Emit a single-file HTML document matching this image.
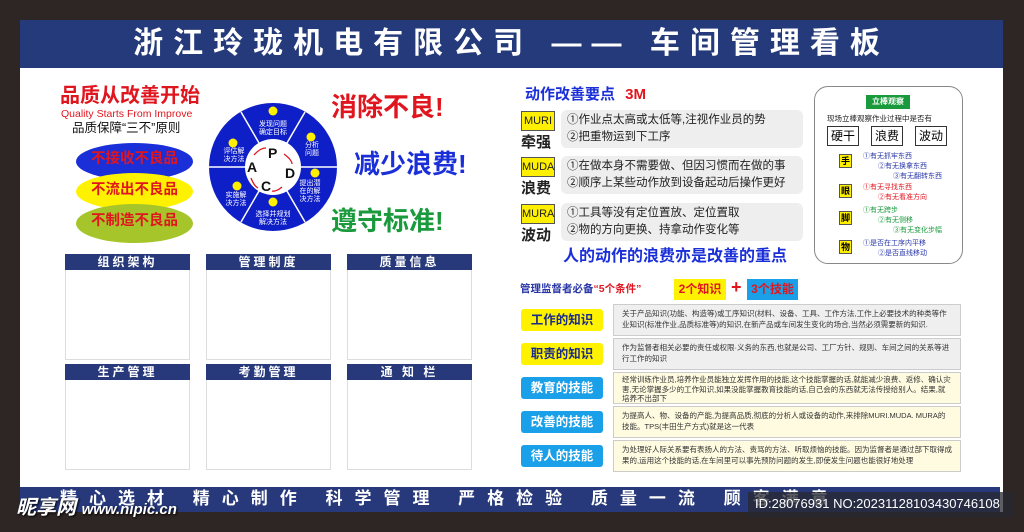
<!DOCTYPE html>
<html><head><meta charset="utf-8"><style>
*{margin:0;padding:0;box-sizing:border-box}
body{width:1024px;height:532px;background:#2e2624;position:relative;overflow:hidden;font-family:"Liberation Sans","Noto Sans CJK SC",sans-serif}
.a{position:absolute;white-space:nowrap;line-height:1.2}
.b{font-weight:bold}
.ph{position:absolute;background:#27397a;color:#fff;font-size:12px;font-weight:bold;text-align:center;letter-spacing:3px;line-height:16px;height:16px}
.pb{position:absolute;border:1px solid #ddd;background:#fff}
.mb{position:absolute;background:#eee;border-radius:6px;left:561px;width:242px;height:38px;font-size:11.5px;line-height:17px;padding:2px 6px;color:#222}
.ml{position:absolute;left:521px;width:34px;height:20px;background:#ffef00;border:1px solid #555;font-size:11px;text-align:center;line-height:18px;color:#222}
.mc{position:absolute;left:521px;font-size:15px;font-weight:bold;color:#222}
.kl{position:absolute;left:521px;width:82px;height:22px;border-radius:3px;font-size:12.5px;font-weight:bold;text-align:center;line-height:22px}
.kt{position:absolute;left:613px;width:348px;height:32px;border:1px solid #ccc;font-size:7.5px;line-height:11px;padding:3px 8px;color:#333;white-space:normal}
.sq{position:absolute;left:839px;width:13px;height:14px;background:#ffef00;border:1px solid #555;font-size:9px;font-weight:bold;text-align:center;line-height:12px}
.ob{position:absolute;border:1px solid #333;background:#fff;width:32px;height:20px;font-size:12px;text-align:center;line-height:18px}
.s7{position:absolute;font-size:7px;white-space:nowrap}
</style></head><body>
<div class="a" style="left:20px;top:20px;width:983px;height:492px;background:#fff"></div>
<div class="a" style="left:20px;top:20px;width:983px;height:48px;background:#243a7a"></div>
<div class="a b" style="left:20px;top:26px;width:983px;text-align:center;color:#fff;font-size:30px;letter-spacing:10px">浙江玲珑机电有限公司 —— 车间管理看板</div>

<div class="a b" style="left:60px;top:84px;color:#e0161f;font-size:20px;line-height:24px">品质从改善开始</div>
<div class="a" style="left:61px;top:108px;color:#e0161f;font-size:10.5px;line-height:12px">Quality Starts From Improve</div>
<div class="a" style="left:72px;top:121px;color:#111;font-size:12.5px;line-height:15px">品质保障“三不”原则</div>
<div class="a" style="left:76px;top:143px;width:117px;height:37px;border-radius:50%;background:#1a2fd8"></div>
<div class="a" style="left:76px;top:173px;width:117px;height:37px;border-radius:50%;background:#fff200"></div>
<div class="a" style="left:76px;top:204px;width:117px;height:39px;border-radius:50%;background:#a6c52a"></div>
<div class="a b" style="left:76px;top:151px;width:117px;text-align:center;color:#e0161f;font-size:14.5px">不接收不良品</div>
<div class="a b" style="left:76px;top:182px;width:117px;text-align:center;color:#e0161f;font-size:14.5px">不流出不良品</div>
<div class="a b" style="left:76px;top:213px;width:117px;text-align:center;color:#e0161f;font-size:14.5px">不制造不良品</div>

<svg class="a" style="left:208px;top:102px" width="130" height="130" viewBox="0 0 130 130">
<circle cx="65" cy="65" r="64" fill="#0f1fc8"/>
<g stroke="#fff" stroke-width="1.5">
<line x1="1" y1="65" x2="129" y2="65"/><line x1="33" y1="10" x2="97" y2="120"/><line x1="97" y1="10" x2="33" y2="120"/></g>
<circle cx="65" cy="65" r="28" fill="#fff"/>
<g font-family="Liberation Sans" font-weight="bold" font-size="14" fill="#111">
<text x="60" y="56">P</text><text x="77" y="76">D</text><text x="53" y="89">C</text><text x="39" y="70">A</text></g>
<g fill="none" stroke="#e0161f" stroke-width="1.3"><path d="M46 53 Q52 46 58 46"/><path d="M76 52 Q84 58 84 62"/><path d="M74 85 Q68 90 64 89"/><path d="M43 76 Q46 84 50 86"/></g>
<g font-size="7" fill="#fff" text-anchor="middle" font-family="Noto Sans CJK SC">
<text x="65" y="24">发现问题</text><text x="65" y="32">确定目标</text>
<text x="104" y="45">分析</text><text x="104" y="53">问题</text>
<text x="102" y="83">提出潜</text><text x="102" y="91">在的解</text><text x="102" y="99">决方法</text>
<text x="65" y="114">选择并规划</text><text x="65" y="122">解决方法</text>
<text x="28" y="95">实施解</text><text x="28" y="103">决方法</text>
<text x="26" y="51">评估解</text><text x="26" y="59">决方法</text></g>
<g fill="#ffef00"><circle cx="65" cy="9" r="4.5"/><circle cx="103" cy="35" r="4.5"/><circle cx="107" cy="71" r="4.5"/><circle cx="65" cy="100" r="4.5"/><circle cx="29" cy="84" r="4.5"/><circle cx="25" cy="41" r="4.5"/></g>
</svg>

<div class="a b" style="left:331px;top:92px;color:#e0161f;font-size:26px">消除不良!</div>
<div class="a b" style="left:354px;top:149px;color:#1a2fd8;font-size:26px">减少浪费!</div>
<div class="a b" style="left:331px;top:206px;color:#1a9a3c;font-size:26px">遵守标准!</div>

<div class="pb" style="left:65px;top:254px;width:125px;height:106px"></div><div class="ph" style="left:65px;top:254px;width:125px">组织架构</div>
<div class="pb" style="left:206px;top:254px;width:125px;height:106px"></div><div class="ph" style="left:206px;top:254px;width:125px">管理制度</div>
<div class="pb" style="left:347px;top:254px;width:125px;height:106px"></div><div class="ph" style="left:347px;top:254px;width:125px">质量信息</div>
<div class="pb" style="left:65px;top:364px;width:125px;height:106px"></div><div class="ph" style="left:65px;top:364px;width:125px">生产管理</div>
<div class="pb" style="left:206px;top:364px;width:125px;height:106px"></div><div class="ph" style="left:206px;top:364px;width:125px">考勤管理</div>
<div class="pb" style="left:347px;top:364px;width:125px;height:106px"></div><div class="ph" style="left:347px;top:364px;width:125px">通 知 栏</div>

<div class="a b" style="left:525px;top:86px;color:#1a2fd8;font-size:15px">动作改善要点 <span style="color:#e0161f;margin-left:6px">3M</span></div>
<div class="ml" style="top:111px">MURI</div><div class="mc" style="top:131px">牵强</div>
<div class="mb" style="top:110px">①作业点太高或太低等,注视作业员的势<br>②把重物运到下工序</div>
<div class="ml" style="top:157px">MUDA</div><div class="mc" style="top:177px">浪费</div>
<div class="mb" style="top:156px">①在做本身不需要做、但因习惯而在做的事<br>②顺序上某些动作放到设备起动后操作更好</div>
<div class="ml" style="top:204px">MURA</div><div class="mc" style="top:224px">波动</div>
<div class="mb" style="top:203px">①工具等没有定位置放、定位置取<br>②物的方向更换、持拿动作变化等</div>
<div class="a b" style="left:563px;top:247px;color:#1a2fd8;font-size:16px">人的动作的浪费亦是改善的重点</div>

<div class="a" style="left:814px;top:86px;width:149px;height:178px;border:1.5px solid #888;border-radius:14px"></div>
<div class="a b" style="left:866px;top:95px;width:44px;height:14px;background:#1a9a3c;color:#fff;font-size:8px;text-align:center;line-height:14px">立棒观察</div>
<div class="s7" style="left:827px;top:113px;font-size:7.5px;color:#222">现场立棒观察作业过程中是否有</div>
<div class="ob" style="left:827px;top:126px">硬干</div><div class="ob" style="left:871px;top:126px">浪费</div><div class="ob" style="left:915px;top:126px">波动</div>
<div class="sq" style="top:154px">手</div><div class="sq" style="top:184px">眼</div><div class="sq" style="top:211px">脚</div><div class="sq" style="top:240px">物</div>
<div class="s7" style="left:863px;top:151px;color:#2a37a8">①有无抓牢东西</div>
<div class="s7" style="left:878px;top:161px;color:#2a37a8">②有无换拿东西</div>
<div class="s7" style="left:893px;top:171px;color:#2a37a8">③有无翻转东西</div>
<div class="s7" style="left:863px;top:182px;color:#e0161f">①有无寻找东西</div>
<div class="s7" style="left:878px;top:192px;color:#e0161f">②有无看准方向</div>
<div class="s7" style="left:863px;top:205px;color:#1a9a3c">①有无跨步</div>
<div class="s7" style="left:878px;top:215px;color:#1a9a3c">②有无侧移</div>
<div class="s7" style="left:893px;top:225px;color:#1a9a3c">③有无变化步幅</div>
<div class="s7" style="left:863px;top:238px;color:#2a37a8">①是否在工序内平移</div>
<div class="s7" style="left:878px;top:248px;color:#2a37a8">②是否直线移动</div>

<div class="a b" style="left:520px;top:283px;font-size:10.5px;color:#2a37a8">管理监督者必备<span style="color:#e0161f">“5个条件”</span></div>
<div class="a b" style="left:674px;top:279px;width:52px;height:21px;background:#fff200;color:#e0161f;font-size:12px;text-align:center;line-height:21px">2个知识</div>
<div class="a b" style="left:731px;top:277px;color:#e0161f;font-size:18px">+</div>
<div class="a b" style="left:747px;top:279px;width:51px;height:21px;background:#1aa0e8;color:#e0161f;font-size:12px;text-align:center;line-height:21px">3个技能</div>

<div class="kl" style="top:309px;background:#fff200;color:#1a2a8a">工作的知识</div>
<div class="kl" style="top:343px;background:#fff200;color:#1a2a8a">职责的知识</div>
<div class="kl" style="top:377px;background:#1aa0e8;color:#fff">教育的技能</div>
<div class="kl" style="top:411px;background:#1aa0e8;color:#fff">改善的技能</div>
<div class="kl" style="top:445px;background:#1aa0e8;color:#fff">待人的技能</div>
<div class="kt" style="top:304px;background:#efefef">关于产品知识(功能、构造等)或工序知识(材料、设备、工具、工作方法,工作上必要技术的种类等作业知识(标准作业,品质标准等)的知识,在新产品或车间发生变化的场合,当然必须需要新的知识.</div>
<div class="kt" style="top:338px;background:#efefef">作为监督者相关必要的责任或权限·义务的东西,也就是公司、工厂方针、规则、车间之间的关系等进行工作的知识</div>
<div class="kt" style="top:372px;background:#fffbe0;height:32px;line-height:9.5px;padding-top:2px">经常训练作业员,培养作业员能独立发挥作用的技能,这个技能掌握的话,就能减少浪费、返修、确认灾害,无论掌握多少的工作知识,如果没能掌握教育技能的话,自己会的东西就无法传授给别人。结果,就培养不出部下</div>
<div class="kt" style="top:406px;background:#fffbe0">为提高人、物、设备的产能,为提高品质,彻底的分析人或设备的动作,来排除MURI.MUDA. MURA的技能。TPS(丰田生产方式)就是这一代表</div>
<div class="kt" style="top:440px;background:#fffbe0">为处理好人际关系要有表扬人的方法、责骂的方法、听取烦恼的技能。因为监督者是通过部下取得成果的,运用这个技能的话,在车间里可以事先预防问题的发生,即使发生问题也能很好地处理</div>

<div class="a" style="left:20px;top:487px;width:980px;height:25px;background:#27397a"></div>
<div class="a b" style="left:60px;top:489px;color:#fff;font-size:17px;letter-spacing:12px">精心选材 精心制作 科学管理 严格检验 质量一流 顾客满意</div>
<div class="a" style="left:748px;top:492px;width:265px;height:25px;background:rgba(40,40,50,.75)"></div>
<div class="a" style="left:755px;top:496px;color:#fff;font-size:13px">ID:28076931 NO:20231128103430746108</div>
<div class="a b" style="left:16px;top:496px;color:#fff;font-size:20px;font-style:italic;text-shadow:1px 1px 2px #000">昵享网 <span style="font-size:15px">www.nipic.cn</span></div>
</body></html>
